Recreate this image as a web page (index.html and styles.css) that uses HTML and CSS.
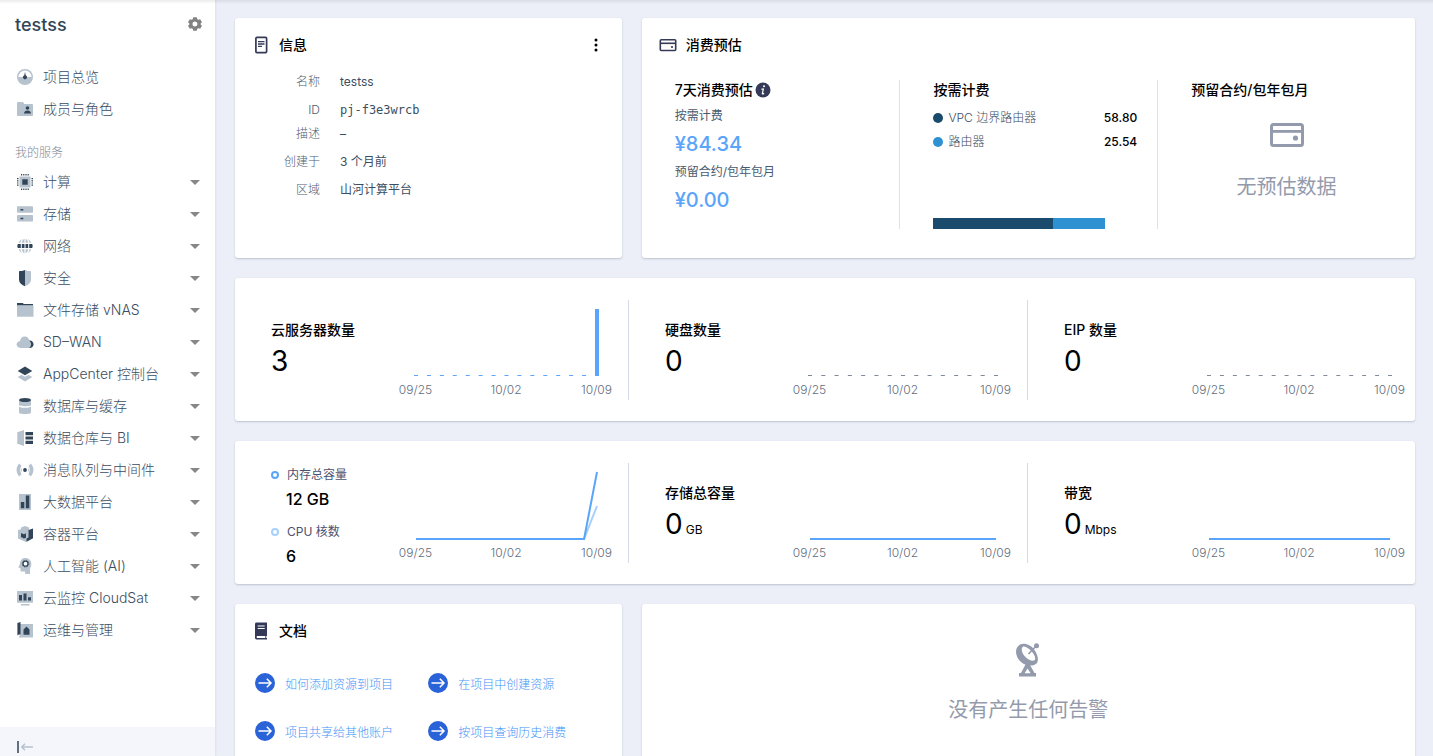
FILE: index.html
```html
<!DOCTYPE html>
<html lang="zh-CN">
<head>
<meta charset="utf-8">
<meta name="viewport" content="width=device-width, initial-scale=1">
<title>testss</title>
<link rel="stylesheet" href="styles.css">
</head>
<body>
<div class="app">
  <aside class="sidebar">
    <header class="project">
      <h1 class="project-name">testss</h1>
      <button class="icon-button" type="button" aria-label="设置">
        <svg class="gear" viewBox="0 0 14 14"><path fill-rule="evenodd" d="M5.2.3h3.6l.5 1.9 1.1.6 1.8-.6L14 5.3l-1.4 1.3v.9L14 8.700l-1.800 3.100-1.800-.6-1.100.6-.5 1.900H5.200l-.5-1.900-1.100-.6-1.800.6L0 8.700l1.400-1.200v-.9L0 5.300l1.800-3.100 1.800.6 1.100-.6zM7 4.500a2.500 2.500 0 1 0 0 5 2.500 2.500 0 0 0 0-5z"/></svg>
      </button>
    </header>

    <nav class="nav">
      <a class="nav-item" href="#"><svg class="nav-icon" viewBox="0 0 16 16"><circle class="lt" cx="8" cy="8" r="8"/><path fill="#fff" d="M1.500 8a6.500 6.500 0 0 1 13 0z"/><path class="dk" d="M8 3l.8 3.500a1.900 1.900 0 1 1-1.600 0z"/></svg><span>项目总览</span></a>
      <a class="nav-item" href="#"><svg class="nav-icon" viewBox="0 0 16 16"><path class="lt" d="M0 2q0-.9.9-.9h5L7.500 3H15q1 0 1 1v10q0 .9-.9.900H.9Q0 14.900 0 14z"/><circle class="dk" cx="10.500" cy="7" r="1.800"/><path class="dk" d="M7 12.500c0-4 7-4 7 0z"/></svg><span>成员与角色</span></a>
      <h2 class="nav-heading">我的服务</h2>
      <button class="nav-item" type="button"><svg class="nav-icon" viewBox="0 0 16 16"><path class="lt" d="M2.500 2.500h11v11h-11z"/><path class="dk" d="M5.300 5.300h5.400v5.400H5.300zM4 0h1.200v1.500H4zm2.200 0h1.200v1.500H6.200zm2.200 0h1.200v1.500H8.400zm2.200 0h1.200v1.500h-1.200zM4 14.500h1.200V16H4zm2.200 0h1.200V16H6.200zm2.200 0h1.200V16H8.400zm2.200 0h1.200V16h-1.200zM0 4h1.500v1.200H0zm0 2.200h1.500v1.200H0zm0 2.200h1.500v1.200H0zm0 2.200h1.500v1.200H0zM14.500 4H16v1.200h-1.500zm0 2.200H16v1.200h-1.500zm0 2.200H16v1.200h-1.500zm0 2.200H16v1.200h-1.500z"/></svg><span>计算</span></button>
      <button class="nav-item" type="button"><svg class="nav-icon" viewBox="0 0 16 16"><rect class="lt" y=".3" width="16" height="6.500" rx=".7"/><rect class="lt" y="9" width="16" height="6.500" rx=".7"/><path class="dk" d="M3.500 3h2.800v1.500H3.500zm0 8.700h2.800v1.500H3.500z"/></svg><span>存储</span></button>
      <button class="nav-item" type="button"><svg class="nav-icon" viewBox="0 0 16 16"><path class="lt" d="M7.400.8v4H4.800C5.300 2.600 6.200 1.200 7.400.8zM8.600.8v4h2.600C10.700 2.600 9.800 1.200 8.600.8zM5 1.300C4.200 2.200 3.700 3.400 3.400 4.800H1.600C2.300 3.200 3.500 2 5 1.300zm6 0c.8.900 1.300 2.100 1.600 3.500h1.800C13.700 3.200 12.500 2 11 1.300zM7.400 15.200v-4H4.800c.5 2.200 1.400 3.600 2.600 4zm1.200 0v-4h2.600c-.5 2.200-1.400 3.600-2.600 4zM5 14.700c-.8-.9-1.300-2.100-1.600-3.500H1.600c.7 1.600 1.900 2.800 3.400 3.500zm6 0c.8-.9 1.300-2.100 1.600-3.500h1.800c-.7 1.600-1.900 2.800-3.400 3.500z"/><path class="dk" d="M.8 6h3v4h-3Q-.2 8 .8 6zm4 0h2.700v4H4.800zm3.700 0h2.700v4H8.500zm3.700 0h3q1 2 0 4h-3z"/></svg><span>网络</span></button>
      <button class="nav-item" type="button"><svg class="nav-icon" viewBox="0 0 16 16"><path class="dk" d="M8 0v16.200C4.200 14.800 2 12.700 2 9.500V1.200C4.200 1.200 6 .8 8 0z"/><path class="lt" d="M8 0v16.200c3.800-1.400 6-3.500 6-6.700V1.200C11.800 1.200 10 .8 8 0z"/></svg><span>安全</span></button>
      <button class="nav-item" type="button"><svg class="nav-icon" viewBox="0 0 16 16"><path class="dk" d="M0 1.100h5.800l1 .8H16v2H0z"/><path class="lt" d="M0 3.200h16.500v11.500H0z"/></svg><span>文件存储 vNAS</span></button>
      <button class="nav-item" type="button"><svg class="nav-icon" viewBox="0 0 16 16"><path class="dk" d="M12 6.500c2.800-.5 4.500 1.500 4.500 3.800S15 14 12.500 14H8z"/><path class="lt" d="M3.500 13.900C1 13.900-.4 12.300-.4 10.500S.9 7.200 3 7c.3-2.700 2.200-4.600 4.700-4.600 2.700 0 4.500 2 4.700 4.500 1.100.7 1.700 1.900 1.700 3.300 0 1.500-.7 2.900-1.900 3.700z"/></svg><span>SD–WAN</span></button>
      <button class="nav-item" type="button"><svg class="nav-icon" viewBox="0 0 16 16"><path class="lt" d="M.7 11L8 7l7.300 4L8 15.500z"/><path fill="#fff" d="M0 6.500l8 4.300 8-4.300-8-4z"/><path class="dk" d="M.7 5L8 .5 15.300 5 8 9.300z"/></svg><span>AppCenter 控制台</span></button>
      <button class="nav-item" type="button"><svg class="nav-icon" viewBox="0 0 16 16"><path class="lt" d="M2 2v5c0 1.600 12 1.600 12 0V2zM2 8.500v6c0 2 12 2 12 0v-6c-1 1.700-11 1.700-12 0z"/><ellipse class="dk" cx="8" cy="2" rx="6" ry="2"/></svg><span>数据库与缓存</span></button>
      <button class="nav-item" type="button"><svg class="nav-icon" viewBox="0 0 16 16"><path class="lt" d="M.3 2.300L7 0v16L.3 13.700z"/><path class="dk" d="M8.500 2H16v3.200H8.500zm0 4.400H16v3.200H8.500zm0 4.400H16V14H8.500z"/></svg><span>数据仓库与 BI</span></button>
      <button class="nav-item" type="button"><svg class="nav-icon" viewBox="0 0 16 16"><circle class="dk" cx="8" cy="8" r="1.900"/><path class="lt" d="M2 1.500l2.500 2.300Q2 8 4.500 12.200L2 14.500Q-3 8 2 1.500zM14 1.500l-2.500 2.300Q14 8 11.500 12.200l2.500 2.300Q19 8 14 1.500zM5 5.500v5Q3.200 8 5 5.500zm6 0v5q1.800-2.500 0-5z"/></svg><span>消息队列与中间件</span></button>
      <button class="nav-item" type="button"><svg class="nav-icon" viewBox="0 0 16 16"><path class="lt" d="M2 0h12v16H2z"/><path class="dk" d="M3.800 8h3.500v6.300H3.800zM8.800 1.500h3.500v12.800H8.800z"/></svg><span>大数据平台</span></button>
      <button class="nav-item" type="button"><svg class="nav-icon" viewBox="0 0 16 16"><path class="lt" d="M8 0l4 1.500v3l4-1.500v9l-7 4-8-3.500V4l3-.8V1.500z"/><path class="dk" d="M4 7l3 1.200 2-1v4.600l-2 .7-3-1.600zM11.500 4L16 2.400v9.800l-6.500 3.600v-3.300l2-1z"/></svg><span>容器平台</span></button>
      <button class="nav-item" type="button"><svg class="nav-icon" viewBox="0 0 16 16"><path class="lt" d="M8 0c4 0 6.300 2.600 6.300 6 0 2.500-1.300 3.800-1.300 5.500V16l-5-.2v-2.300H4.500q-1 0-1-1v-2.200L1.300 9.500 3 6C3 2.600 4.800 0 8 0z"/><circle cx="8.500" cy="5.700" r="2.500" fill="#fff" stroke="#324558" stroke-width="1.300"/><circle cx="8.500" cy="5.700" r="3.400" fill="none" stroke="#324558" stroke-width=".7" stroke-dasharray="1.300 1.370"/></svg><span>人工智能 (AI)</span></button>
      <button class="nav-item" type="button"><svg class="nav-icon" viewBox="0 0 16 16"><path class="lt" d="M0 1h16v11.700H0zM4 13.900h8.500v1.500H4z"/><path class="dk" d="M2 5h3v5.500H2zm4.500-1.500h3v7h-3zM11 7.300h3v3.200h-3z"/></svg><span>云监控 CloudSat</span></button>
      <button class="nav-item" type="button"><svg class="nav-icon" viewBox="0 0 16 16"><path class="lt" d="M3 2h13v13.500H1.500L3 13z"/><path class="dk" d="M.4 1L3.500 0v12.500H1.800l-1.400 1zM6.500 7.500L9.500 4.500l3 3v5.200h-6z"/></svg><span>运维与管理</span></button>
    </nav>

    <footer class="sidebar-foot">
      <button class="icon-button" type="button" aria-label="收起">
        <svg class="collapse" viewBox="0 0 16 12"><path fill="none" stroke="#324558" stroke-width="1.500" d="M1 0v12"/><path fill="none" stroke="#b6c2cd" stroke-width="1.500" d="M16 6H4.500M8 2.800L4.800 6 8 9.200"/></svg>
      </button>
    </footer>
  </aside>

  <main class="content">
    <div class="row-split">
      <section class="card padded">
        <header class="card-head">
          <svg class="head-icon" viewBox="0 0 18 18"><rect x="3.900" y="1.400" width="10.700" height="15.200" rx="1" fill="none" stroke="#343a57" stroke-width="1.700"/><path stroke="#343a57" stroke-width="1.300" d="M6 5.700h6.500M6 8h6.500M6 10.300h4"/></svg>
          <h2 class="card-title">信息</h2>
          <button class="icon-button more" type="button" aria-label="更多">
            <svg class="dots" viewBox="0 0 4 14"><circle cx="2" cy="2" r="1.500"/><circle cx="2" cy="7" r="1.500"/><circle cx="2" cy="12" r="1.500"/></svg>
          </button>
        </header>
        <dl class="facts">
          <div class="fact"><dt>名称</dt><dd>testss</dd></div>
          <div class="fact tight"><dt>ID</dt><dd class="mono">pj-f3e3wrcb</dd></div>
          <div class="fact"><dt>描述</dt><dd>–</dd></div>
          <div class="fact"><dt>创建于</dt><dd>3 个月前</dd></div>
          <div class="fact"><dt>区域</dt><dd>山河计算平台</dd></div>
        </dl>
      </section>

      <section class="card">
        <header class="card-head forecast-head">
          <svg class="head-icon" viewBox="0 0 18 18"><rect x="1.300" y="3.800" width="15.400" height="10.700" rx="1" fill="none" stroke="#343a57" stroke-width="1.600"/><path stroke="#343a57" stroke-width="1.600" d="M1 7.300h16"/><circle cx="13" cy="11" r="1.100" fill="#343a57"/></svg>
          <h2 class="card-title">消费预估</h2>
        </header>
        <div class="forecast">
          <div class="forecast-col">
            <h3 class="col-title">7天消费预估<svg class="info" viewBox="0 0 16 16"><circle cx="8" cy="8" r="7.500" fill="#343a57"/><circle cx="9" cy="4.200" r="1" fill="#fff"/><path fill="none" stroke="#fff" stroke-width="1.200" d="M6.400 7.200h2L7.300 11.400q-.1 1 1.800 0"/></svg></h3>
            <p class="cost-label">按需计费</p>
            <p class="cost">¥84.34</p>
            <p class="cost-label">预留合约/包年包月</p>
            <p class="cost">¥0.00</p>
          </div>
          <div class="forecast-col">
            <h3 class="col-title">按需计费</h3>
            <ul class="legend">
              <li><i class="dot navy"></i><span>VPC 边界路由器</span><b>58.80</b></li>
              <li><i class="dot sky"></i><span>路由器</span><b>25.54</b></li>
            </ul>
            <div class="stack"><div class="navy" style="width:69.7%"></div><div class="sky" style="width:30.3%"></div></div>
          </div>
          <div class="forecast-col">
            <h3 class="col-title">预留合约/包年包月</h3>
            <div class="empty">
              <svg class="empty-wallet" viewBox="0 0 34 24"><rect x="1.500" y="1.500" width="31" height="21" rx="2" fill="none" stroke="#939aac" stroke-width="3"/><path stroke="#939aac" stroke-width="2.800" d="M1 8.400h32"/><circle cx="25.500" cy="15" r="2.600" fill="#939aac"/></svg>
              <p class="empty-text">无预估数据</p>
            </div>
          </div>
        </div>
      </section>
    </div>

    <section class="card metrics">
      <div class="metric">
        <div class="metric-info"><h3 class="metric-title">云服务器数量</h3><p class="metric-value">3</p></div>
        <div class="chart"><svg class="plot" viewBox="0 0 182 67" preserveAspectRatio="none"><path class="ticks" d="M-2 66.500H173"/><path class="column" d="M180 0h4v67h-4z"/></svg>
          <div class="axis"><span>09/25</span><span>10/02</span><span>10/09</span></div></div>
      </div>
      <div class="metric">
        <div class="metric-info"><h3 class="metric-title">硬盘数量</h3><p class="metric-value">0</p></div>
        <div class="chart"><svg class="plot" viewBox="0 0 182 67" preserveAspectRatio="none"><path class="ticks muted" d="M-2 66.500H184"/></svg>
          <div class="axis"><span>09/25</span><span>10/02</span><span>10/09</span></div></div>
      </div>
      <div class="metric">
        <div class="metric-info"><h3 class="metric-title">EIP 数量</h3><p class="metric-value">0</p></div>
        <div class="chart"><svg class="plot" viewBox="0 0 182 67" preserveAspectRatio="none"><path class="ticks muted" d="M-2 66.500H184"/></svg>
          <div class="axis"><span>09/25</span><span>10/02</span><span>10/09</span></div></div>
      </div>
    </section>

    <section class="card metrics">
      <div class="metric">
        <div class="metric-info pair">
          <h3 class="series"><i class="ring"></i>内存总容量</h3><p class="series-value">12 GB</p>
          <h3 class="series"><i class="ring pale"></i>CPU 核数</h3><p class="series-value">6</p>
        </div>
        <div class="chart"><svg class="plot" viewBox="0 0 182 67" preserveAspectRatio="none"><path class="line pale" d="M0 67H169L182 34"/><path class="line" d="M0 67H169L182 0"/></svg>
          <div class="axis"><span>09/25</span><span>10/02</span><span>10/09</span></div></div>
      </div>
      <div class="metric">
        <div class="metric-info"><h3 class="metric-title">存储总容量</h3><p class="metric-value"><span>0</span><small>GB</small></p></div>
        <div class="chart"><svg class="plot" viewBox="0 0 182 67" preserveAspectRatio="none"><path class="line" d="M0 67H182"/></svg>
          <div class="axis"><span>09/25</span><span>10/02</span><span>10/09</span></div></div>
      </div>
      <div class="metric">
        <div class="metric-info"><h3 class="metric-title">带宽</h3><p class="metric-value"><span>0</span><small>Mbps</small></p></div>
        <div class="chart"><svg class="plot" viewBox="0 0 182 67" preserveAspectRatio="none"><path class="line" d="M0 67H182"/></svg>
          <div class="axis"><span>09/25</span><span>10/02</span><span>10/09</span></div></div>
      </div>
    </section>

    <div class="row-split">
      <section class="card padded">
        <header class="card-head">
          <svg class="head-icon" viewBox="0 0 18 18"><path fill="#343a57" fill-rule="evenodd" d="M4.500.6H15v13.500h-.8v2H15v1.300H4.500Q3 17.400 3 16V2Q3 .6 4.500.6zM5.700 3.500v1h7v-1zm0 2.500v1h7V6zM5 14.100q-.8 1 0 2h8.300v-2z"/></svg>
          <h2 class="card-title">文档</h2>
        </header>
        <ul class="docs">
          <li><a href="#"><svg class="go" viewBox="0 0 20 20"><circle cx="10" cy="10" r="10"/><path d="M3.500 10H16M11.800 5.800L16 10l-4.200 4.200"/></svg>如何添加资源到项目</a></li>
          <li><a href="#"><svg class="go" viewBox="0 0 20 20"><circle cx="10" cy="10" r="10"/><path d="M3.500 10H16M11.800 5.800L16 10l-4.200 4.200"/></svg>在项目中创建资源</a></li>
          <li><a href="#"><svg class="go" viewBox="0 0 20 20"><circle cx="10" cy="10" r="10"/><path d="M3.500 10H16M11.800 5.800L16 10l-4.200 4.200"/></svg>项目共享给其他账户</a></li>
          <li><a href="#"><svg class="go" viewBox="0 0 20 20"><circle cx="10" cy="10" r="10"/><path d="M3.500 10H16M11.800 5.800L16 10l-4.200 4.200"/></svg>按项目查询历史消费</a></li>
        </ul>
      </section>
      <section class="card alerts">
        <svg class="dish" viewBox="0 0 24 34"><g fill="#939aac"><circle cx="20.500" cy="2.700" r="2.500"/><path fill-rule="evenodd" d="M4 1.500C9-.5 15 2 18.500 7c3 4.500 4.500 9.500 2.500 13-2.500 3-8.500 3.500-13 1C1.500 17.500-1.500 10 .8 5Q2 2.500 4 1.500zM6.500 4C4.800 6 6 10.500 9.500 14c3.500 3.600 7.800 4.800 9.300 3 1.200-1.900-.5-6-3.800-9.300C11.700 4.400 8 2.600 6.500 4z"/><path fill-rule="evenodd" d="M9.500 21.500h4.200L18.500 30H20v3.500H3V30h2zM11.600 25.500L8.600 30.300h6z"/></g><path stroke="#939aac" stroke-width="1.600" d="M20 3.200L12.500 11"/></svg>
        <p class="empty-text">没有产生任何告警</p>
      </section>
    </div>
  </main>
</div>
</body>
</html>
```
FILE: styles.css
```css
*, *::before, *::after { box-sizing: border-box; }

body {
  margin: 0;
  background: #eceff8;
  color: #4a5b6e;
  font-family: Inter, "Noto Sans CJK SC", sans-serif;
  font-size: 12px;
  line-height: 20px;
}

/* shadow cast by the bar above the page */
body::before {
  content: "";
  position: fixed;
  inset: 0 0 auto;
  height: 4px;
  background: linear-gradient(rgba(0, 0, 0, .08), rgba(0, 0, 0, 0));
  z-index: 2;
}

h1, h2, h3, p, dl, dd, ul { margin: 0; padding: 0; font-weight: 400; }
ul { list-style: none; }
svg { display: block; flex: none; }
a { color: inherit; text-decoration: none; }
button { border: 0; padding: 0; background: none; color: inherit; font: inherit; cursor: pointer; }

.app { display: flex; height: 100vh; overflow: hidden; }

/* sidebar */
.sidebar {
  display: flex;
  flex-direction: column;
  flex: 0 0 215px;
  background: #fff;
  box-shadow: 1px 0 2px rgba(50, 69, 88, .08);
}
.project { display: flex; align-items: center; justify-content: space-between; padding: 12px 13px 24px 15px; }
.project-name { font-size: 18px; line-height: 25px; font-weight: 500; color: #324558; }
.icon-button { display: flex; }
.project .icon-button { padding-bottom: 2px; }
.gear { width: 14px; height: 14px; fill: #828282; }

.nav { flex: 1; display: flex; flex-direction: column; min-height: 0; }
.nav-item {
  display: flex;
  align-items: center;
  gap: 10px;
  width: 100%;
  padding: 6px 15px 6px 17px;
  font-size: 14px;
  line-height: 20px;
  font-weight: 300;
  color: #3a4d61;
  text-align: left;
}
button.nav-item::after {
  content: "";
  margin-left: auto;
  border: 5px solid transparent;
  border-top-color: #868686;
  border-bottom: 0;
}
.nav-icon { width: 16px; height: 16px; overflow: visible; }
.lt { fill: #b6c2cd; }
.dk { fill: #324558; }
.nav-heading { padding: 18px 15px 3px; font-size: 12px; line-height: 20px; font-weight: 300; color: #7f8b99; }
.sidebar-foot { padding: 14px 17px 3px; background: #f4f6fb; }
.collapse { width: 16px; height: 12px; }

/* content */
.content {
  flex: 1;
  min-width: 0;
  overflow: auto;
  scrollbar-width: none;
  padding: 18px 18px 20px 20px;
  display: flex;
  flex-direction: column;
  gap: 20px;
}
.row-split { display: grid; grid-template-columns: minmax(0, 1fr) minmax(0, 2fr); gap: 20px; }
.card { background: #fff; border-radius: 3px; box-shadow: 0 1px 2px rgba(50, 69, 88, .25); }
.padded { padding: 0 20px; }
.card-head { display: flex; align-items: center; padding-top: 17px; margin-left: -3px; }
.head-icon { width: 18px; height: 18px; }
.card-title { margin-left: 9px; font-size: 14px; line-height: 20px; font-weight: 500; color: #000; }
.more { margin-left: auto; padding: 0 4px; }
.dots { width: 4px; height: 14px; }

.facts { padding: 17px 0 0; }
.fact { display: grid; grid-template-columns: 65px 1fr; column-gap: 20px; margin-bottom: 8px; }
.fact.tight { margin-bottom: 4px; }
.fact dt { text-align: right; font-weight: 300; color: #4f6072; }
.fact dd { color: #3c4e61; }
.fact .mono { font-family: "DejaVu Sans Mono", monospace; }

/* forecast */
.forecast-head { padding-left: 17px; margin-left: 0; }
.forecast { display: grid; grid-template-columns: repeat(3, minmax(0, 1fr)); padding: 25px 0 29px; }
.forecast-col { display: flex; flex-direction: column; padding-left: 33px; min-height: 149px; }
.forecast-col + .forecast-col { border-left: 1px solid #dfe2e5; }
.col-title { display: flex; align-items: center; gap: 2px; font-size: 14px; line-height: 20px; font-weight: 500; color: #000; }
.info { width: 16px; height: 16px; }
.cost-label { padding-top: 6px; line-height: 20px; }
.cost { padding-top: 6px; font-size: 20px; line-height: 24px; font-weight: 500; color: #5aa4fa; }
.legend { padding: 6px 20px 0 0; }
.legend li { display: flex; align-items: center; line-height: 24px; font-weight: 300; color: #3a4d61; }
.legend span { margin-left: 5px; }
.legend b { margin-left: auto; font-weight: 500; color: #000; }
.dot { width: 10px; height: 10px; border-radius: 50%; }
.navy { background: #1a4b6c; }
.sky { background: #2e91d2; }
.stack { display: flex; height: 11px; margin: auto 52px 0 0; }
.empty { display: flex; flex-direction: column; align-items: center; padding: 23px 33px 0 0; gap: 26px; }
.empty-wallet { width: 34px; height: 24px; }
.empty-text { font-size: 20px; line-height: 28px; color: #939aac; }

/* metrics */
.metrics { display: grid; grid-template-columns: 393fr 399fr 388fr; padding: 22px 0 21px; }
.metric { display: flex; min-height: 100px; padding: 0 14px 0 36px; border-left: 1px solid #d5dbe4; }
.metric:first-child { border-left: 0; }
.metric:last-child { padding-right: 8px; }
.metric-info { flex: 0 0 127px; padding-top: 20px; }
.metric-title { font-size: 14px; line-height: 20px; font-weight: 500; color: #000; }
.metric-value { display: flex; align-items: baseline; gap: 3px; padding-top: 5px; font-size: 28px; line-height: 32px; color: #000; }
.metric-value small { font-size: 12px; line-height: 16px; }
.chart { flex: 1; min-width: 0; padding-top: 9px; }
.plot { width: calc(100% - 35px); height: 67px; margin: 0 auto; overflow: visible; }
.axis { display: flex; justify-content: space-between; padding-top: 5px; line-height: 18px; font-weight: 300; color: #5f6e7e; }
.axis span { width: 35px; display: flex; justify-content: center; }
.ticks { fill: none; stroke: #5aa4fa; stroke-width: 1; stroke-dasharray: 4 9; }
.ticks.muted { stroke: #7f8a99; }
.column { fill: #5aa4fa; }
.line { fill: none; stroke: #5aa4fa; stroke-width: 2; vector-effect: non-scaling-stroke; }
.line.pale { stroke: #a8d0fc; }
.metric-info.pair { display: flex; flex-direction: column; justify-content: space-between; padding-top: 2px; }
.series { display: flex; align-items: center; gap: 8px; font-size: 12px; line-height: 20px; color: #4b5170; }
.series-value { padding-left: 15px; font-size: 16px; line-height: 14px; font-weight: 500; color: #000; }
.series-value:not(:last-child) { margin-bottom: 9px; }
.ring { width: 8px; height: 8px; border: 2px solid #5aa4fa; border-radius: 50%; }
.ring.pale { border-color: #a8d0fc; }

/* documents and alerts */
.docs { display: grid; grid-template-columns: 1fr 1fr; row-gap: 24px; padding: 32px 0 28px; }
.docs a { display: flex; align-items: flex-start; gap: 10px; line-height: 24px; font-weight: 300; color: #3f93f8; }
.go { width: 20px; height: 20px; fill: #2a62d8; }
.go path { fill: none; stroke: #fff; stroke-width: 1.5; }
.alerts { display: flex; flex-direction: column; align-items: center; padding-top: 39px; gap: 19px; }
.dish { width: 24px; height: 34px; }
```
